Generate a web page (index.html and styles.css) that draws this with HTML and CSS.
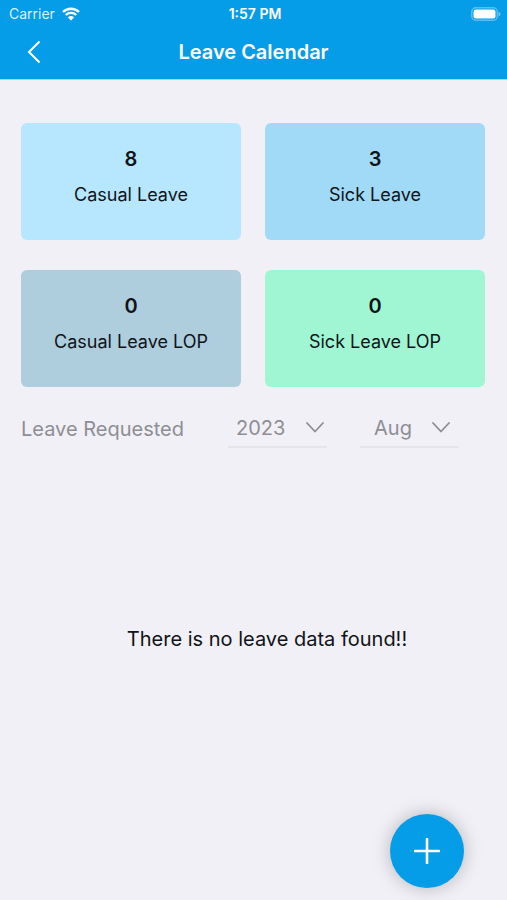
FILE: index.html
```html
<!DOCTYPE html>
<html lang="en">
<head>
  <meta charset="utf-8">
  <meta name="viewport" content="width=device-width, initial-scale=1">
  <title>Leave Calendar</title>
  <link rel="stylesheet" href="styles.css">
</head>
<body>
  <header class="header">
    <div class="status">
      <div class="carrier">
        <span>Carrier</span>
        <svg class="wifi" viewBox="0 0 18 14" aria-hidden="true">
          <path d="M1 5a11.5 11.5 0 0 1 16 0M3.8 8a7.4 7.4 0 0 1 10.4 0" fill="none" stroke="currentColor" stroke-width="2.3"/>
          <path d="M9 13.6 5.9 10.4a4.4 4.4 0 0 1 6.2 0z" fill="currentColor"/>
        </svg>
      </div>
      <span class="time">1:57 PM</span>
      <svg class="battery" viewBox="0 0 30 14" aria-hidden="true">
        <rect x=".75" y=".75" width="25.5" height="12.5" rx="4" fill="none" stroke="#fff" stroke-opacity=".35" stroke-width="1.5"/>
        <rect x="2.5" y="2.5" width="22" height="9" rx="2.2" fill="#fff"/>
        <path d="M27.5 4.5q2.2 1 2.2 2.5t-2.2 2.5z" fill="#fff" fill-opacity=".4"/>
      </svg>
    </div>
    <div class="nav">
      <button class="back" type="button" aria-label="Back">
        <svg viewBox="0 0 14 24" aria-hidden="true"><path d="M12.5 1.5 2 12l10.500 10.500" fill="none" stroke="currentColor" stroke-width="2"/></svg>
      </button>
      <h1 class="title">Leave Calendar</h1>
    </div>
  </header>

  <main class="main">
    <section class="cards">
      <div class="card casual"><strong class="count">8</strong><span>Casual Leave</span></div>
      <div class="card sick"><strong class="count">3</strong><span>Sick Leave</span></div>
      <div class="card casual-lop"><strong class="count">0</strong><span>Casual Leave LOP</span></div>
      <div class="card sick-lop"><strong class="count">0</strong><span>Sick Leave LOP</span></div>
    </section>

    <section class="filters">
      <h2 class="filter-title">Leave Requested</h2>
      <div class="picker">
        <select class="select" aria-label="Year"><option>2023</option></select>
        <svg class="chevron" viewBox="0 0 18 11" aria-hidden="true"><path d="m1 1 8 8.500L17 1" fill="none" stroke="currentColor" stroke-width="1.800" stroke-linecap="round"/></svg>
      </div>
      <div class="picker month">
        <select class="select" aria-label="Month"><option>Aug</option></select>
        <svg class="chevron" viewBox="0 0 18 11" aria-hidden="true"><path d="m1 1 8 8.500L17 1" fill="none" stroke="currentColor" stroke-width="1.800" stroke-linecap="round"/></svg>
      </div>
    </section>

    <p class="empty">There is no leave data found!!</p>
  </main>

  <button class="add" type="button" aria-label="Add leave">
    <svg viewBox="0 0 26 26" aria-hidden="true"><path d="M13 1v24M1 13h24" stroke="currentColor" stroke-width="2.600" stroke-linecap="round"/></svg>
  </button>
</body>
</html>
```
FILE: styles.css
```css
* {
  box-sizing: border-box;
}

body {
  margin: 0;
  min-height: 100vh;
  display: flex;
  flex-direction: column;
  background: #f1f0f6;
  color: #101318;
  font-family: Inter, "Liberation Sans", sans-serif;
}

button,
select {
  font: inherit;
  border: 0;
  padding: 0;
}

svg {
  display: block;
}

.header {
  padding-bottom: 2px;
  background: #059ce8;
  color: #fff;
  border-bottom: 1px solid #8fdcfb;
}

.status {
  display: grid;
  grid-template-columns: 1fr auto 1fr;
  align-items: center;
  height: 27px;
  padding: 0 6px 0 9px;
  font-size: 14px;
}

.carrier {
  display: flex;
  align-items: center;
  gap: 7px;
  color: #d9f3ff;
}

.wifi {
  width: 18px;
  height: 14px;
  color: #fff;
}

.time {
  font-size: 14px;
  font-weight: 600;
}

.battery {
  width: 30px;
  height: 14px;
  justify-self: end;
}

.nav {
  display: grid;
  grid-template-columns: 40px 1fr 40px;
  align-items: center;
  height: 50px;
  padding: 0 14px;
}

.back {
  display: flex;
  justify-content: center;
  background: none;
  color: inherit;
}

.back svg {
  width: 14px;
  height: 24px;
}

.title {
  margin: 0;
  text-align: center;
  font-size: 20px;
  font-weight: 600;
}

.main {
  flex: 1;
  display: flex;
  flex-direction: column;
  padding: 43px 22px 0 21px;
}

.cards {
  display: grid;
  grid-template-columns: 1fr 1fr;
  gap: 30px 24px;
}

.card {
  display: flex;
  flex-direction: column;
  align-items: center;
  gap: 10px;
  padding: 24px 8px 33px;
  border-radius: 6px;
  font-size: 18px;
  line-height: 25px;
}

.count {
  font-size: 20px;
  font-weight: 600;
}

.casual { background: #b6e7ff; }
.sick { background: #a0daf6; }
.casual-lop { background: #aecddd; }
.sick-lop { background: #a0f6d3; }

.filters {
  display: grid;
  grid-template-columns: 1fr 99px 99px;
  column-gap: 33px;
  align-items: center;
  margin-top: 22px;
  padding-right: 26px;
  color: #8e8e95;
  font-size: 20px;
}

.filter-title {
  margin: 0;
  font-size: 20px;
  font-weight: 400;
  white-space: nowrap;
}

.picker {
  display: grid;
  align-items: center;
  border-bottom: 2px solid #e5e5eb;
}

.select,
.chevron {
  grid-area: 1 / 1;
}

.select {
  appearance: none;
  width: 100%;
  height: 37px;
  padding-left: 8px;
  background: none;
  color: inherit;
}

.chevron {
  justify-self: end;
  width: 18px;
  height: 11px;
  margin-right: 3px;
  pointer-events: none;
}

.month .select {
  padding-left: 14px;
}

.month .chevron {
  margin-right: 9px;
}

.empty {
  margin: 179px 0 0 28px;
  text-align: center;
  font-size: 20px;
  line-height: 24px;
}

.add {
  position: fixed;
  right: 43px;
  bottom: 12px;
  display: flex;
  align-items: center;
  justify-content: center;
  width: 74px;
  height: 74px;
  border-radius: 50%;
  background: #059ce8;
  color: #fff;
  box-shadow: 0 0 18px rgba(0, 0, 0, 0.25);
}

.add svg {
  width: 26px;
  height: 26px;
}
```
